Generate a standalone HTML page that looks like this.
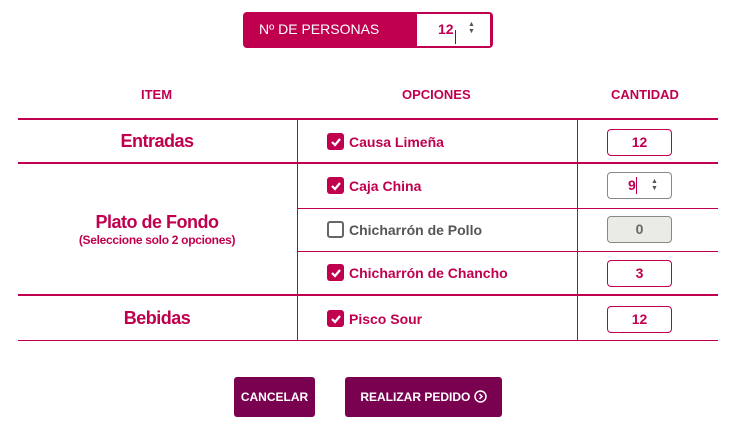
<!DOCTYPE html>
<html><head><style>
*{box-sizing:border-box;margin:0;padding:0}
body{width:738px;height:431px;background:#fff;font-family:"Liberation Sans","DejaVu Sans",sans-serif;position:relative;overflow:hidden;color:#c0004f}
.a{position:absolute}
.h{font-size:13px;font-weight:bold;top:87px}
.line{position:absolute;left:18px;width:700px;background:#c0004f}
.v{position:absolute;width:1px;background:#c0004f}
.cb{position:absolute;left:327px;width:17px;height:17px;border-radius:3px;background:#c0004f}
.cb svg{position:absolute;left:2px;top:2px}
.lbl{position:absolute;left:349px;font-size:14px;font-weight:bold}
.q{position:absolute;left:607px;width:65px;height:27px;border:1px solid #c0004f;border-radius:4px;font-size:14px;font-weight:bold;text-align:center;line-height:25px}
.it{position:absolute;font-weight:bold;font-size:18px;text-align:center;width:278px;left:18px;letter-spacing:-0.5px}
.btn{position:absolute;top:377px;height:40px;background:#7a0050;color:#fff;font-size:12px;font-weight:bold;border-radius:3px;text-align:center;line-height:40px}
</style></head><body>
<div class="a" style="left:243px;top:12px;width:250px;height:36px;background:#c0004f;border-radius:4px"></div>
<div class="a" style="left:259px;top:21px;color:#fff;font-size:14px">Nº DE PERSONAS</div>
<div class="a" style="left:417px;top:14px;width:73px;height:32px;background:#fff"></div>
<div class="a" style="left:438px;top:21px;font-size:14px;font-weight:bold">12</div>
<div class="a" style="left:468px;top:21px;font-size:7px;color:#555;line-height:7px">▲<br>▼</div>
<div class="a" style="left:455px;top:30px;width:1px;height:14px;background:#333"></div>

<div class="a h" style="left:141px">ITEM</div>
<div class="a h" style="left:402px">OPCIONES</div>
<div class="a h" style="left:611px">CANTIDAD</div>

<div class="line" style="top:118px;height:2px"></div>
<div class="line" style="top:162px;height:2px"></div>
<div class="line" style="top:208px;height:1px;left:297px;width:421px"></div>
<div class="line" style="top:251px;height:1px;left:297px;width:421px"></div>
<div class="line" style="top:294px;height:2px"></div>
<div class="line" style="top:340px;height:1px"></div>
<div class="v" style="left:297px;top:120px;height:221px"></div>
<div class="v" style="left:577px;top:120px;height:221px"></div>

<div class="it" style="top:131px">Entradas</div>
<div class="it" style="top:212px">Plato de Fondo</div>
<div class="it" style="top:233px;font-size:12px;letter-spacing:-0.3px">(Seleccione solo 2 opciones)</div>
<div class="it" style="top:308px">Bebidas</div>

<div class="cb" style="top:133px"><svg width="13" height="13"><path d="M3 7l3 3 5-6" stroke="#fff" stroke-width="2.2" fill="none"/></svg></div>
<div class="lbl" style="top:134px">Causa Limeña</div>
<div class="cb" style="top:177px"><svg width="13" height="13"><path d="M3 7l3 3 5-6" stroke="#fff" stroke-width="2.2" fill="none"/></svg></div>
<div class="lbl" style="top:178px">Caja China</div>
<div class="cb" style="top:221px;background:#fff;border:2px solid #666"></div>
<div class="lbl" style="top:222px;color:#555">Chicharrón de Pollo</div>
<div class="cb" style="top:264px"><svg width="13" height="13"><path d="M3 7l3 3 5-6" stroke="#fff" stroke-width="2.2" fill="none"/></svg></div>
<div class="lbl" style="top:265px">Chicharrón de Chancho</div>
<div class="cb" style="top:310px"><svg width="13" height="13"><path d="M3 7l3 3 5-6" stroke="#fff" stroke-width="2.2" fill="none"/></svg></div>
<div class="lbl" style="top:311px">Pisco Sour</div>

<div class="q" style="top:129px">12</div>
<div class="q" style="top:172px;border-color:#888;text-align:left;padding-left:20px">9</div>
<div class="a" style="left:636px;top:177px;width:1px;height:17px;background:#c0004f"></div>
<div class="a" style="left:651px;top:178px;font-size:7px;color:#555;line-height:7px">▲<br>▼</div>
<div class="q" style="top:216px;background:#ebebe5;border-color:#888;color:#666">0</div>
<div class="q" style="top:260px">3</div>
<div class="q" style="top:306px">12</div>

<div class="btn" style="left:234px;width:81px">CANCELAR</div>
<div class="btn" style="left:345px;width:157px">REALIZAR PEDIDO <svg width="13" height="13" style="vertical-align:-2px"><circle cx="6.5" cy="6.5" r="5.5" stroke="#fff" stroke-width="1.5" fill="none"/><path d="M5.5 4l2.5 2.5-2.5 2.5" stroke="#fff" stroke-width="1.5" fill="none"/></svg></div>
</body></html>
